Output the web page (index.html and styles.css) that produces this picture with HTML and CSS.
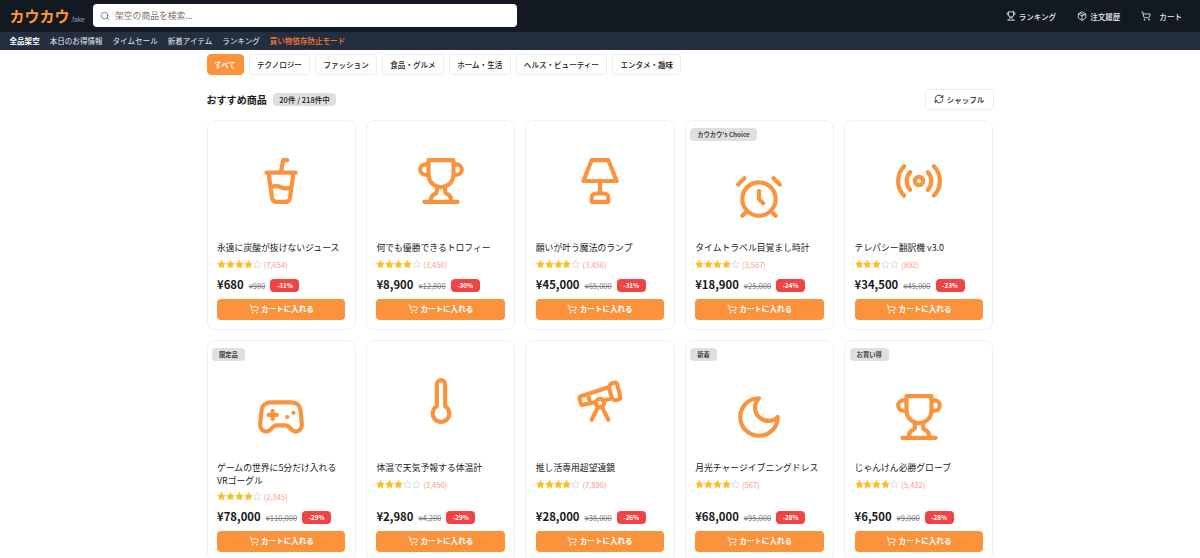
FILE: index.html
```
<!DOCTYPE html>
<html lang="ja">
<head>
    <meta charset="UTF-8">
    <meta name="viewport" content="width=device-width, initial-scale=1.0">
    <title>カウカウ.fake</title>
    <link rel="stylesheet" href="styles.css">
</head>
<body>
    <header class="header">
        <div class="logo">カウカウ<span class="logo-sub">.fake</span></div>
        <div class="search">
            <svg class="icon search-icon" viewBox="0 0 24 24"><circle cx="11" cy="11" r="8"/><path d="m21 21-4.3-4.3"/></svg>
            <input class="search-input" type="text" placeholder="架空の商品を検索...">
        </div>
        <div class="header-links">
            <a class="header-link ranking">
                <svg class="icon" viewBox="0 0 24 24"><path d="M6 9H4.5a2.5 2.5 0 0 1 0-5H6M18 9h1.5a2.5 2.5 0 0 0 0-5H18M4 22h16M10 14.66V17c0 .55-.47.98-.97 1.21C7.85 18.75 7 20.24 7 22M14 14.66V17c0 .55.47.98.97 1.21C16.15 18.75 17 20.24 17 22M18 2H6v7a6 6 0 0 0 12 0V2Z"/></svg>
                ランキング
            </a>
            <a class="header-link orders">
                <svg class="icon" viewBox="0 0 24 24"><path d="m7.5 4.27 9 5.15M21 8a2 2 0 0 0-1-1.73l-7-4a2 2 0 0 0-2 0l-7 4A2 2 0 0 0 3 8v8a2 2 0 0 0 1 1.73l7 4a2 2 0 0 0 2 0l7-4A2 2 0 0 0 21 16ZM3.3 7l8.7 5 8.7-5M12 22V12"/></svg>
                注文履歴
            </a>
            <a class="header-link cart">
                <svg class="icon" viewBox="0 0 24 24"><circle cx="8" cy="21" r="1"/><circle cx="19" cy="21" r="1"/><path d="M2.05 2.05h2l2.66 12.42a2 2 0 0 0 2 1.58h9.78a2 2 0 0 0 1.95-1.57l1.65-7.43H5.12"/></svg>
                カート
            </a>
        </div>
    </header>
    <nav class="nav">
        <a class="current">全品架空</a>
        <a>本日のお得情報</a>
        <a>タイムセール</a>
        <a>新着アイテム</a>
        <a>ランキング</a>
        <a class="warning">買い物依存防止モード</a>
    </nav>

    <main class="container">
        <div class="categories">
            <button class="category active">すべて</button>
            <button class="category">テクノロジー</button>
            <button class="category">ファッション</button>
            <button class="category">食品・グルメ</button>
            <button class="category">ホーム・生活</button>
            <button class="category">ヘルス・ビューティー</button>
            <button class="category">エンタメ・趣味</button>
        </div>

        <div class="section-head">
            <h2>おすすめ商品</h2>
            <span class="count">20件 / 218件中</span>
            <button class="shuffle">
                <svg class="icon" viewBox="0 0 24 24"><path d="M3 12a9 9 0 0 1 9-9 9.75 9.75 0 0 1 6.74 2.74L21 8M21 3v5h-5M21 12a9 9 0 0 1-9 9 9.75 9.75 0 0 1-6.74-2.74L3 16M8 16H3v5"/></svg>
                シャッフル
            </button>
        </div>

        <div class="products" id="products"></div>
    </main>

    <script>
        const icons = {
            cup: '<path d="m6 8 1.75 12.28a2 2 0 0 0 2 1.72h4.54a2 2 0 0 0 2-1.72L18 8M5 8h14M7 15a6.47 6.47 0 0 1 5 0 6.47 6.47 0 0 0 5 0M12 8l1-6h2"/>',
            trophy: '<path d="M6 9H4.5a2.5 2.5 0 0 1 0-5H6M18 9h1.5a2.5 2.5 0 0 0 0-5H18M4 22h16M10 14.66V17c0 .55-.47.98-.97 1.21C7.85 18.75 7 20.24 7 22M14 14.66V17c0 .55.47.98.97 1.21C16.15 18.75 17 20.24 17 22M18 2H6v7a6 6 0 0 0 12 0V2Z"/>',
            lamp: '<path d="M8 2h8l4 10H4L8 2ZM12 12v6M8 22v-2c0-1.1.9-2 2-2h4a2 2 0 0 1 2 2v2H8Z"/>',
            alarm: '<circle cx="12" cy="13" r="8"/><path d="M12 9v4l2 2M5 3 2 6M22 6l-3-3M6.38 18.7 4 21M17.64 18.67 20 21"/>',
            radio: '<path d="M4.9 19.1C1 15.2 1 8.8 4.9 4.9M7.8 16.2c-2.3-2.3-2.3-6.1 0-8.5M16.2 7.8c2.3 2.3 2.3 6.1 0 8.5M19.1 4.9C23 8.8 23 15.1 19.1 19"/><circle cx="12" cy="12" r="2"/>',
            gamepad: '<path d="M6 11h4M8 9v4M15 12h.01M18 10h.01M17.32 5H6.68a4 4 0 0 0-3.978 3.59c-.006.052-.01.101-.017.152C2.604 9.416 2 14.456 2 16a3 3 0 0 0 3 3c1 0 1.5-.5 2-1l1.414-1.414A2 2 0 0 1 9.828 16h4.344a2 2 0 0 1 1.414.586L17 18c.5.5 1 1 2 1a3 3 0 0 0 3-3c0-1.545-.604-6.584-.685-7.258-.007-.05-.011-.1-.017-.151A4 4 0 0 0 17.32 5z"/>',
            thermometer: '<path d="M14 4v10.54a4 4 0 1 1-4 0V4a2 2 0 0 1 4 0Z"/>',
            telescope: '<path d="m10.065 12.493-6.18 1.318a.934.934 0 0 1-1.108-.702l-.537-2.15a1.07 1.07 0 0 1 .691-1.265l13.504-4.44M13.56 11.747l4.332-.924M16 21l-3.105-6.21M16.485 5.94a2 2 0 0 1 1.455-2.425l1.09-.272a1 1 0 0 1 1.212.727l1.515 6.06a1 1 0 0 1-.727 1.213l-1.09.272a2 2 0 0 1-2.425-1.455zM6.158 8.633l1.114 4.456M8 21l3.105-6.21"/><circle cx="12" cy="13" r="2"/>',
            moon: '<path d="M12 3a6 6 0 0 0 9 9 9 9 0 1 1-9-9Z"/>',
            cart: '<circle cx="8" cy="21" r="1"/><circle cx="19" cy="21" r="1"/><path d="M2.05 2.05h2l2.66 12.42a2 2 0 0 0 2 1.58h9.78a2 2 0 0 0 1.95-1.57l1.65-7.43H5.12"/>',
            star: '<path d="m12 2 3.09 6.26L22 9.27l-5 4.87 1.18 6.88L12 17.77l-6.18 3.25L7 14.14 2 9.27l6.91-1.01L12 2z"/>'
        };

        const products = [
            { name: '永遠に炭酸が抜けないジュース', icon: 'cup', stars: 4, reviews: '7,654', price: '680', old: '980', off: 31 },
            { name: '何でも優勝できるトロフィー', icon: 'trophy', stars: 4, reviews: '3,456', price: '8,900', old: '12,800', off: 30 },
            { name: '願いが叶う魔法のランプ', icon: 'lamp', stars: 4, reviews: '3,456', price: '45,000', old: '65,000', off: 31 },
            { name: 'タイムトラベル目覚まし時計', icon: 'alarm', stars: 4, reviews: '3,567', price: '18,900', old: '25,000', off: 24, badge: "カウカウ's Choice" },
            { name: 'テレパシー翻訳機 v3.0', icon: 'radio', stars: 3, reviews: '892', price: '34,500', old: '45,000', off: 23 },
            { name: 'ゲームの世界に5分だけ入れるVRゴーグル', icon: 'gamepad', stars: 4, reviews: '2,345', price: '78,000', old: '110,000', off: 29, badge: '限定品' },
            { name: '体温で天気予報する体温計', icon: 'thermometer', stars: 3, reviews: '3,456', price: '2,980', old: '4,200', off: 29 },
            { name: '推し活専用超望遠鏡', icon: 'telescope', stars: 4, reviews: '7,890', price: '28,000', old: '38,000', off: 26 },
            { name: '月光チャージイブニングドレス', icon: 'moon', stars: 4, reviews: '567', price: '68,000', old: '95,000', off: 28, badge: '新着' },
            { name: 'じゃんけん必勝グローブ', icon: 'trophy', stars: 4, reviews: '5,432', price: '6,500', old: '9,000', off: 28, badge: 'お買い得' }
        ];

        function svg(name, cls) {
            return `<svg class="icon ${cls}" viewBox="0 0 24 24">${icons[name]}</svg>`;
        }

        function renderStars(count) {
            return [1, 2, 3, 4, 5].map(n => svg('star', n <= count ? 'star filled' : 'star')).join('');
        }

        document.getElementById('products').innerHTML = products.map(p => `
            <div class="card">
                ${p.badge ? `<span class="badge">${p.badge}</span>` : ''}
                <div class="card-image ${p.badge ? 'with-badge' : ''}">${svg(p.icon, 'product-icon')}</div>
                <h3 class="card-title">${p.name}</h3>
                <div class="rating">${renderStars(p.stars)}<span class="reviews">(${p.reviews})</span></div>
                <div class="price-row">
                    <span class="price">¥${p.price}</span>
                    <span class="old-price">¥${p.old}</span>
                    <span class="discount">-${p.off}%</span>
                </div>
                <button class="add-button">${svg('cart', '')}カートに入れる</button>
            </div>`
        ).join('');
    </script>
</body>
</html>
```

FILE: styles.css
```
* {
    box-sizing: border-box;
}
body {
    margin: 0;
    height: 558px;
    overflow: hidden;
    font-family: "Noto Sans CJK JP", sans-serif;
    font-size: 7.55px;
    color: #18181b;
    background: #fff;
}
button, input {
    font-family: inherit;
    font-size: inherit;
    color: inherit;
}
button {
    display: flex;
    align-items: center;
    justify-content: center;
    padding: 0;
    cursor: pointer;
}
.icon {
    width: 10px;
    height: 10px;
    flex-shrink: 0;
    fill: none;
    stroke: currentColor;
    stroke-width: 2;
    stroke-linecap: round;
    stroke-linejoin: round;
}

/* Header */
.header {
    display: flex;
    align-items: center;
    height: 32px;
    padding: 0 18px 0 9.5px;
    background: #131921;
    color: #e8eaed;
}
.logo {
    width: 83px;
    padding-top: 3px;
    font-size: 15px;
    font-weight: 700;
    line-height: 22px;
    color: #ff9838;
    white-space: nowrap;
}
.logo-sub {
    margin-left: 1px;
    font-size: 6.25px;
    font-weight: 400;
    color: #9ca3af;
}
.search {
    display: flex;
    align-items: center;
    gap: 5px;
    width: 424px;
    height: 23px;
    margin-bottom: 1px;
    padding: 0 7.5px;
    border-radius: 4px;
    background: #fff;
}
.search-icon {
    color: #6b7280;
}
.search-input {
    flex: 1;
    padding: 0;
    border: none;
    outline: none;
    font-size: 8.8px;
    background: none;
}
.search-input::placeholder {
    color: #757575;
}
.header-links {
    display: flex;
    margin-left: auto;
}
.header-link {
    display: flex;
    align-items: center;
    gap: 3px;
    font-weight: 500;
}
.orders {
    margin-left: 21px;
}
.cart {
    gap: 8px;
    margin-left: 21px;
}
.nav {
    display: flex;
    align-items: center;
    gap: 10px;
    height: 18px;
    padding: 0 9.5px 1px;
    background: #232f3e;
    color: #e5e7eb;
}
.nav .current {
    font-weight: 700;
    color: #fff;
}
.nav .warning {
    font-weight: 500;
    color: #ff7a3d;
}

/* Filters */
.container {
    width: 787px;
    margin: 0 auto;
    padding-top: 4px;
}
.categories {
    display: flex;
    gap: 5px;
}
.category {
    height: 20.5px;
    padding: 0 7.3px;
    border: 1px solid #ececee;
    border-radius: 4px;
    font-weight: 500;
    background: #fff;
}
.category.active {
    padding: 0 6.7px;
    border-color: #fb923c;
    background: #fb923c;
    color: #fff;
}
.section-head {
    display: flex;
    align-items: center;
    height: 20.5px;
    margin: 14.5px 0 10.5px;
}
.section-head h2 {
    margin: 0;
    font-size: 10.05px;
    font-weight: 700;
}
.count {
    margin-left: 6px;
    padding: 0 6.5px;
    border-radius: 4px;
    line-height: 13.5px;
    font-weight: 500;
    background: #dfdfe0;
}
.shuffle {
    gap: 3px;
    width: 69px;
    height: 20.5px;
    margin-left: auto;
    border: 1px solid #ececee;
    border-radius: 4px;
    font-weight: 500;
    background: #fff;
}

/* Products */
.products {
    display: grid;
    grid-template-columns: repeat(5, 1fr);
    gap: 10px;
}
.card {
    position: relative;
    display: flex;
    flex-direction: column;
    padding: 0 9.5px 9.5px;
    border: 1px solid #f0f0f1;
    border-radius: 8px;
    background: #fff;
}
.badge {
    position: absolute;
    top: 7px;
    left: 4.7px;
    padding: 0 6.8px;
    border-radius: 4px;
    font-size: 6.3px;
    line-height: 13px;
    font-weight: 700;
    color: #3f3f46;
    background: #dfdfe0;
}
.card-image {
    display: flex;
    align-items: center;
    justify-content: center;
    height: 120px;
}
.card-image.with-badge {
    padding-top: 31px;
}
.product-icon {
    width: 50px;
    height: 50px;
    color: #fb923c;
}
.card-title {
    margin: 0;
    padding-top: 1px;
    font-size: 8.82px;
    line-height: 12.5px;
    font-weight: 400;
}
.rating {
    display: flex;
    align-items: center;
    height: 11px;
    margin-top: 4px;
}
.star {
    width: 8.9px;
    height: 8.9px;
    color: #d1d5db;
}
.star.filled {
    fill: #fbbf24;
    color: #fbbf24;
}
.reviews {
    margin-left: 2.3px;
    color: #fb9a80;
}
.price-row {
    display: flex;
    align-items: center;
    gap: 5px;
    height: 16px;
    margin-top: auto;
    padding-top: 1px;
}
.price {
    position: relative;
    top: -1px;
    font-size: 11.3px;
    font-weight: 700;
}
.old-price {
    color: #7b7b80;
    text-decoration: line-through;
}
.discount {
    padding: 0 6.6px;
    border-radius: 4px;
    font-size: 6.3px;
    line-height: 13px;
    font-weight: 700;
    background: #ef4444;
    color: #fff;
}
.add-button {
    gap: 2.5px;
    height: 20.5px;
    margin-top: 6.5px;
    padding-bottom: 1px;
    border: none;
    border-radius: 4px;
    font-weight: 700;
    background: #fb923c;
    color: #fff;
}

/* Row heights: one-line titles first, then the row with a wrapped title */
.card:nth-child(-n+5) {
    min-height: 210px;
}
.card:nth-child(n+6) {
    min-height: 222px;
}
```
